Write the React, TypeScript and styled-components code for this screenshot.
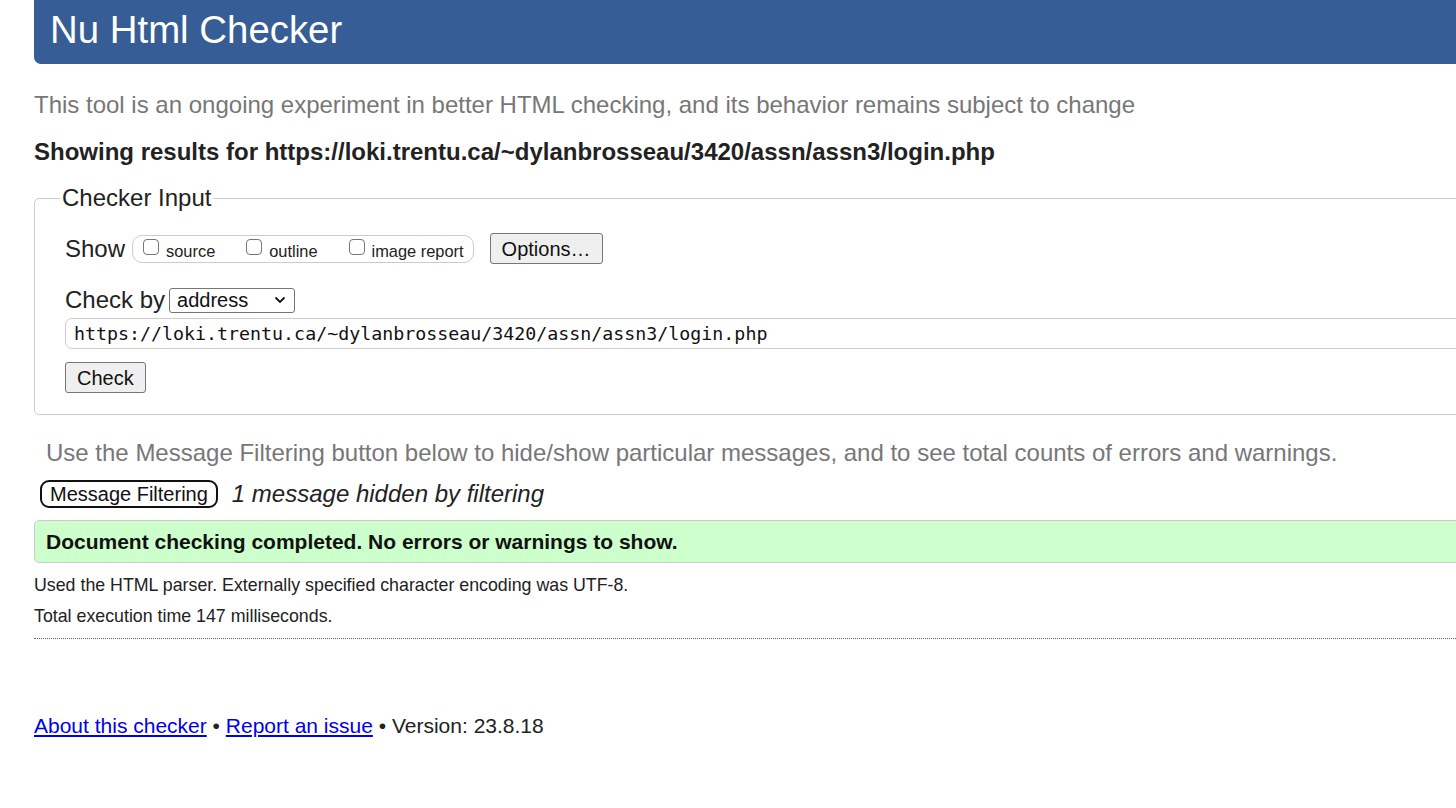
import React from "react";
import styled, { createGlobalStyle } from "styled-components";

const GlobalStyle = createGlobalStyle`
  html, body {
    margin: 0;
    padding: 0;
    background: #fff;
    overflow: hidden;
  }
  body {
    font-family: "Liberation Sans", Arial, sans-serif;
    color: #222;
  }
  * {
    box-sizing: border-box;
  }
`;

const Page = styled.div`
  width: 1480px;
  margin-left: 34px;
`;

const Header = styled.header`
  background: #365d95;
  height: 64px;
  border-radius: 0 0 0 7px;
  display: flex;
  align-items: center;
  padding-left: 16px;

  h1 {
    margin: 0;
    color: #fff;
    font-weight: normal;
    font-size: 38.4px;
    line-height: 1;
    padding-bottom: 4px;
  }
`;

const Intro = styled.p`
  margin: 27px 0 0;
  font-size: 24px;
  color: #777;
  line-height: 28px;
`;

const Results = styled.h2`
  margin: 19px 0 0;
  font-size: 24px;
  font-weight: bold;
  color: #222;
  line-height: 28px;
`;

const Fieldset = styled.fieldset`
  margin: 18px 0 0;
  border: 1px solid #ccc;
  border-radius: 5px;
  padding: 21px 30px 21px;
  min-width: 0;

  legend {
    font-size: 24px;
    padding: 0 2px;
    margin-left: -5px;
    color: #222;
  }
`;

const Row = styled.div<{ $gap?: number; $top?: number }>`
  display: flex;
  align-items: center;
  gap: ${(p) => p.$gap ?? 6}px;
  margin-top: ${(p) => p.$top ?? 0}px;
`;

const Label = styled.span`
  font-size: 24px;
  color: #222;
`;

const CheckGroup = styled.div`
  display: flex;
  align-items: center;
  border: 1px solid #ccc;
  border-radius: 10px;
  height: 28px;
  padding: 0 9px 0 10px;
  gap: 31px;
  margin-right: 9px;
`;

const CheckItem = styled.label`
  display: flex;
  align-items: flex-end;
  font-size: 16.4px;
  color: #222;
  gap: 7px;
  line-height: 16px;
`;

const Box = styled.span`
  display: inline-block;
  width: 16px;
  height: 16px;
  border: 1px solid #767676;
  border-radius: 4px;
  background: #fff;
  margin-bottom: 4px;
`;

const Button = styled.button`
  font-family: "Liberation Sans", Arial, sans-serif;
  font-size: 20px;
  color: #111;
  background: #efefef;
  border: 1px solid #767676;
  border-radius: 3px;
  padding: 0 11px;
  height: 31px;
  line-height: 1;
`;

const Select = styled.div`
  display: flex;
  align-items: center;
  justify-content: space-between;
  width: 126px;
  height: 25px;
  border: 1px solid #767676;
  border-radius: 3px;
  padding: 0 7px 0 7px;
  font-size: 20px;
  color: #111;
  margin-left: -1px;
`;

const UrlInput = styled.div`
  margin-top: 4px;
  height: 31px;
  border: 1px solid #ccc;
  border-radius: 7px;
  display: flex;
  align-items: center;
  padding-left: 8px;
  font-family: "DejaVu Sans Mono", "Liberation Mono", monospace;
  font-size: 18.3px;
  color: #111;
`;

const FilterNote = styled.p`
  margin: 24px 0 0 12px;
  font-size: 24px;
  line-height: 28px;
  color: #777;
`;

const FilterRow = styled.div`
  display: flex;
  align-items: center;
  gap: 14px;
  margin: 13px 0 0 6px;
`;

const FilterButton = styled.button`
  font-family: "Liberation Sans", Arial, sans-serif;
  font-size: 20px;
  color: #111;
  background: #fff;
  border: 2px solid #111;
  border-radius: 9px;
  height: 28px;
  padding: 0 8px;
  line-height: 1;
`;

const Hidden = styled.em`
  font-size: 24px;
  color: #222;
`;

const Success = styled.div`
  margin-top: 12px;
  height: 43px;
  background: #ccffcc;
  border: 1px solid #ccc;
  border-radius: 5px;
  display: flex;
  align-items: center;
  padding-left: 11px;
  font-size: 21px;
  font-weight: bold;
  color: #111;
`;

const Detail = styled.p<{ $top: number }>`
  margin: ${(p) => p.$top}px 0 0;
  font-size: 17.8px;
  line-height: 20px;
  color: #222;
`;

const Rule = styled.hr`
  margin: 12px 0 0;
  border: none;
  border-top: 1px dotted #666;
`;

const Footer = styled.footer`
  margin-top: 75px;
  font-size: 21px;
  color: #222;

  a {
    color: #0000ee;
    text-decoration: underline;
  }
`;

const Chevron = () => (
  <svg width="14" height="10" viewBox="0 0 14 10">
    <path d="M2.5 2.5 L7 7 L11.5 2.5" fill="none" stroke="#111" strokeWidth="1.8" />
  </svg>
);

const App: React.FC = () => {
  return (
    <Page>
      <GlobalStyle />
      <Header>
        <h1>Nu Html Checker</h1>
      </Header>
      <Intro>
        This tool is an ongoing experiment in better HTML checking, and its behavior remains subject to change
      </Intro>
      <Results>Showing results for https://loki.trentu.ca/~dylanbrosseau/3420/assn/assn3/login.php</Results>

      <Fieldset>
        <legend>Checker Input</legend>
        <Row $gap={7}>
          <Label>Show</Label>
          <CheckGroup>
            <CheckItem>
              <Box />
              source
            </CheckItem>
            <CheckItem>
              <Box />
              outline
            </CheckItem>
            <CheckItem>
              <Box />
              image report
            </CheckItem>
          </CheckGroup>
          <Button>Options…</Button>
        </Row>
        <Row $gap={5} $top={22}>
          <Label>Check by</Label>
          <Select>
            <span>address</span>
            <Chevron />
          </Select>
        </Row>
        <UrlInput>https://loki.trentu.ca/~dylanbrosseau/3420/assn/assn3/login.php</UrlInput>
        <Row $top={13}>
          <Button>Check</Button>
        </Row>
      </Fieldset>

      <FilterNote>
        Use the Message Filtering button below to hide/show particular messages, and to see total counts of errors and warnings.
      </FilterNote>
      <FilterRow>
        <FilterButton>Message Filtering</FilterButton>
        <Hidden>1 message hidden by filtering</Hidden>
      </FilterRow>

      <Success>Document checking completed. No errors or warnings to show.</Success>

      <Detail $top={12}>Used the HTML parser. Externally specified character encoding was UTF-8.</Detail>
      <Detail $top={11}>Total execution time 147 milliseconds.</Detail>
      <Rule />

      <Footer>
        <a href="#about">About this checker</a> • <a href="#issue">Report an issue</a> • Version: 23.8.18
      </Footer>
    </Page>
  );
};

export default App;
